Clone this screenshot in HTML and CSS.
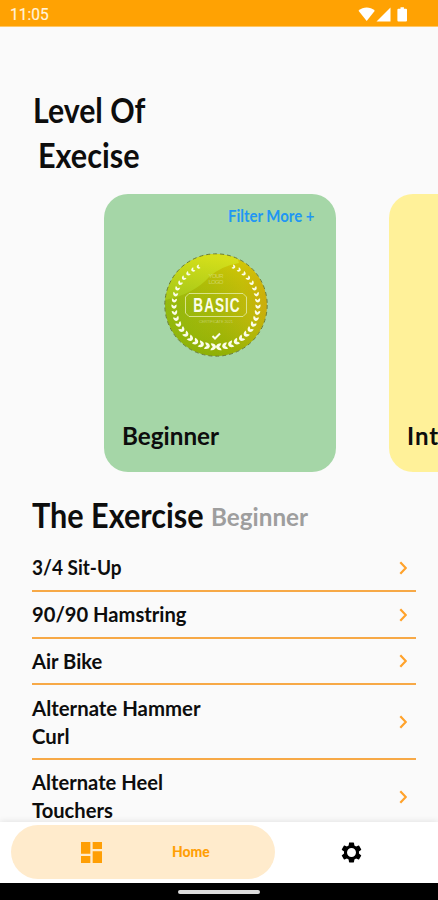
FILE: index.html
```html
<!DOCTYPE html>
<html lang="en">
<head>
<meta charset="utf-8">
<title>Level Of Execise</title>
<link rel="stylesheet" href="styles.css">
</head>
<body>
<div class="screen">
  <header class="status">
    <span class="clock">11:05</span>
    <svg class="status-icons" viewBox="0 0 52 18" width="52" height="18">
      <path d="M.5 4.8C5.400.4 12 .4 16.800 4.800L8.700 15z"/>
      <path d="M32.500 1.500V15.500H18.500z"/>
      <path d="M42.500 1.200h3.400v1.600h2.100q1 0 1 1V14.500q0 1-1 1h-7.600q-1 0-1-1V3.800q0-1 1-1h2.100z"/>
    </svg>
  </header>

  <main class="content">
    <h1 class="title"><span class="fit t-level">Level Of</span><span class="fit t-exec">Execise</span></h1>

    <section class="cards">
      <article class="card green">
        <a class="filter"><span class="fit t-filter">Filter More +</span></a>
        <svg class="badge" viewBox="-53 -53 106 106" width="106" height="106">
          <defs>
            <linearGradient id="gold" x1="0" y1=".65" x2="1" y2=".4">
              <stop offset="0" stop-color="#8bb810"/><stop offset=".5" stop-color="#a5b70b"/><stop offset=".8" stop-color="#c0b80c"/><stop offset="1" stop-color="#d2a80d"/>
            </linearGradient>
            <linearGradient id="shine" x1=".2" y1="0" x2="0" y2="1">
              <stop offset="0" stop-color="#d6e31e"/><stop offset="1" stop-color="#a6c91a"/>
            </linearGradient>
            <linearGradient id="depth" x1="0" y1="0" x2="0" y2="1">
              <stop offset="0" stop-color="#e4d800" stop-opacity=".6"/><stop offset=".55" stop-color="#b5bb00" stop-opacity=".1"/><stop offset="1" stop-color="#7da800" stop-opacity=".5"/>
            </linearGradient>
            <clipPath id="disc"><circle r="51"/></clipPath>
            <g id="leaf"><path d="M-2.200-3Q2.200-3.200 2.600 0Q2.200 3.200-2.200 3Q-1.800 1-.2 0Q-1.800-1-2.200-3z"/></g>
          </defs>
          <circle r="51" fill="url(#gold)"/>
          <circle r="51" fill="url(#depth)"/>
          <path clip-path="url(#disc)" fill="url(#shine)" fill-opacity=".85" d="M-52-52H20L23-42Q5-39-7-28Q-22-11-51-5z"/>
          <circle r="51.200" fill="none" stroke="#66752c" stroke-width=".9" stroke-dasharray="4 3"/>
          <g id="wreath" fill="#fbfde8"></g>
          <g class="faint"><text x="0" y="-27" font-size="6" textLength="15">YOUR</text><text x="0" y="-21" font-size="6" textLength="15">LOGO</text></g>
          <path d="M-27-11.500H27L30.500-8V8L27 11.500H-27L-30.500 8V-8z" stroke-linejoin="round" fill="none" stroke="#dfe89a" stroke-width=".9"/>
          <text class="basic" transform="scale(.65 1)" x="1.500" y="6.500">BASIC</text>
          <text class="faint" x="0" y="18" font-size="4" textLength="34">CERTIFICATE 2021</text>
          <path d="M-3.500 31L-1 33.500L4 28.500" fill="none" stroke="#fbfde8" stroke-width="2"/>
        </svg>
        <h2 class="level"><span class="fit t-beg">Beginner</span></h2>
      </article>
      <article class="card yellow">
        <h2 class="level"><span class="fit t-int">Intermediate</span></h2>
      </article>
    </section>

    <h2 class="subtitle"><span class="fit t-the">The Exercise</span><span class="fit t-sub">Beginner</span></h2>

    <ul class="list">
      <li><span class="fit t-frac">3/4 Sit-Up</span><svg class="chev" viewBox="0 0 8 14"><path d="M1.300 1.200l5.500 5.800l-5.500 5.800"/></svg></li>
      <li><span class="fit">90/90 Hamstring</span><svg class="chev" viewBox="0 0 8 14"><path d="M1.300 1.200l5.500 5.800l-5.500 5.800"/></svg></li>
      <li><span class="fit">Air Bike</span><svg class="chev" viewBox="0 0 8 14"><path d="M1.300 1.200l5.500 5.800l-5.500 5.800"/></svg></li>
      <li><span class="fit t-wide">Alternate Hammer<br>Curl</span><svg class="chev" viewBox="0 0 8 14"><path d="M1.300 1.200l5.500 5.800l-5.500 5.800"/></svg></li>
      <li><span class="fit">Alternate Heel<br>Touchers</span><svg class="chev" viewBox="0 0 8 14"><path d="M1.300 1.200l5.500 5.800l-5.500 5.800"/></svg></li>
    </ul>
  </main>

  <nav class="tabs">
    <a class="tab active">
      <svg viewBox="3 3 18 18" width="21" height="21"><path d="M3 13h8V3H3v10zm0 8h8v-6H3v6zm10 0h8V11h-8v10zm0-18v6h8V3h-8z"/></svg>
      <span class="fit t-home">Home</span>
    </a>
    <a class="tab settings">
      <svg viewBox="0 0 24 24" width="25" height="25"><path d="M19.140 12.940c.04-.3.060-.61.060-.94 0-.32-.02-.64-.07-.94l2.030-1.580a.49.49 0 0 0 .12-.61l-1.920-3.320a.488.488 0 0 0-.59-.22l-2.390.96c-.5-.38-1.030-.7-1.620-.94l-.36-2.540a.484.484 0 0 0-.48-.41h-3.840c-.24 0-.43.170-.47.410l-.36 2.540c-.59.240-1.130.570-1.620.940l-2.390-.96c-.22-.08-.47 0-.59.220L2.740 8.870c-.12.210-.08.470.12.610l2.030 1.580c-.05.300-.09.630-.09.940s.02.640.07.940l-2.030 1.580a.49.49 0 0 0-.12.610l1.920 3.320c.12.220.370.290.59.220l2.390-.96c.5.380 1.030.7 1.620.94l.36 2.540c.05.240.240.410.480.410h3.840c.24 0 .44-.17.470-.41l.36-2.540c.59-.24 1.130-.56 1.620-.94l2.390.96c.22.080.470 0 .59-.22l1.920-3.320c.12-.22.070-.47-.12-.61l-2.010-1.580zM12 16.300a4.300 4.300 0 1 1 0-8.600 4.300 4.300 0 0 1 0 8.600z"/></svg>
    </a>
  </nav>
  <div class="gesture"><i></i></div>
</div>
<script src="wreath.js"></script>
</body>
</html>
```

FILE: styles.css
```css
* { box-sizing: border-box; margin: 0; padding: 0; }
body { background: #fafafa; color: #0d0d0d; font-family: Lato, "Open Sans", sans-serif; font-weight: 700; }
.screen { width: 438px; height: 900px; display: flex; flex-direction: column; overflow: hidden; }

.status { flex: none; height: 27px; background: #ffa203; border-bottom: 1px solid #ffc765; display: flex; justify-content: space-between; align-items: center; padding: 3px 28px 0 10px; }
.clock { font: 400 16px/20px Roboto, sans-serif; color: #fff3dc; -webkit-text-stroke: .2px #fff3dc; display: inline-block; transform: scaleX(.97); transform-origin: 0 0; }
.status-icons { fill: #fff; }

.content { flex: 1; min-height: 0; overflow: hidden; }
.fit { display: inline-block; transform-origin: 0 50%; transform: scaleX(.96); white-space: nowrap; }

.title { padding: 60px 0 0 32px; font-size: 34px; line-height: 45px; font-weight: 700; }
.title .fit { display: block; }
.title .t-level { transform: scaleX(.89); margin-left: .5px; }
.title .t-exec { transform: scaleX(.9); margin-left: 5.500px; }

.cards { display: flex; gap: 53px; padding-left: 104px; margin-top: 17px; }
.card { flex: none; width: 231.500px; height: 278px; border-radius: 24px; display: flex; flex-direction: column; padding: 10.500px 19px 21px; }
.green { background: #a5d6a7; }
.yellow { background: #fff199; justify-content: flex-end; }
.filter { align-self: flex-end; width: 88.500px; color: #2196f3; font-size: 17px; line-height: 22px; }
.t-filter { transform: scaleX(.88); }
.badge { align-self: center; margin: 25.500px 0 0 -8px; }
.level { margin: auto 0 0 -1px; font-size: 25px; line-height: 32px; font-weight: 700; }
.t-beg { transform: scaleX(.97); }
.t-int { letter-spacing: 1px; }
.basic { font: 700 21px "Liberation Sans", sans-serif; letter-spacing: 1.500px; fill: #fbfde8; text-anchor: middle; }
.faint { font-family: "Liberation Sans", sans-serif; font-weight: 400; fill: #fff; fill-opacity: .35; text-anchor: middle; }

.subtitle { display: flex; align-items: baseline; height: 45px; margin-top: 20px; padding-left: 32px; font-size: 34px; line-height: 45px; font-weight: 700; }
.t-the { width: 179px; transform: scaleX(.9); }
.t-sub { color: #9e9e9e; font-size: 25px; transform: scaleX(.97); position: relative; top: -2px; }

.list { list-style: none; margin: 8.200px 22px 0 32px; font-size: 21px; line-height: 28px; }
.list li { display: flex; justify-content: space-between; align-items: center; padding: 8.300px 9px 8.450px 0; border-bottom: 2px solid #f7a947; }
.t-frac { transform: scaleX(.905); }
.t-wide { transform: scaleX(.97); }
.chev { width: 8px; height: 14px; fill: none; stroke: #ffa22b; stroke-width: 2.200; position: relative; top: .5px; }

.tabs { flex: none; height: 61px; background: #fff; display: flex; align-items: center; padding: 0 11px; box-shadow: 0 -1px 6px rgba(0, 0, 0, .09); z-index: 1; }
.tab { display: flex; align-items: center; }
.active { width: 264px; height: 54px; border-radius: 27px; background: #ffebcc; color: #ff9f05; fill: #ff9f05; padding-left: 70px; gap: 70px; font-size: 14.500px; font-weight: 900; }
.t-home { transform: scaleX(.96); position: relative; top: -.5px; }
.settings { margin-left: 64px; fill: #000; }
.gesture { flex: none; height: 17.500px; background: #000; display: flex; justify-content: center; padding-top: 7px; }
.gesture i { width: 82px; height: 4px; border-radius: 2px; background: #ddd; }
```

FILE: wreath.js
```javascript
// Two mirrored laurel branches, growing from the bottom of the badge towards the top.
const wreath = document.getElementById('wreath');
for (let i = 0; i < 19; i++) {
  const a = 4 + i * 8.4;
  const s = (1.15 - i * 0.027).toFixed(2);
  for (const side of [1, -1]) {
    const u = document.createElementNS('http://www.w3.org/2000/svg', 'use');
    u.setAttribute('href', '#leaf');
    u.setAttribute('transform', `rotate(${-side * a}) translate(0 42) scale(${-side * s} ${s})`);
    wreath.append(u);
  }
}
```
